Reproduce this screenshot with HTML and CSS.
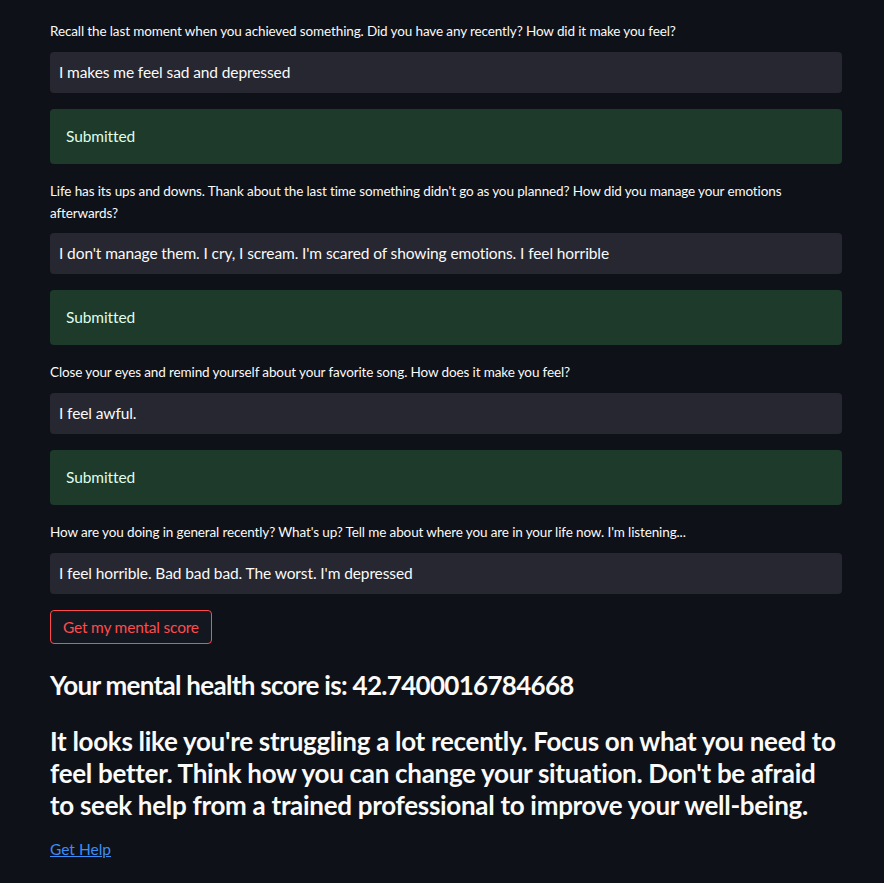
FILE: index.html
```html
<!DOCTYPE html>
<html>
<head>
<meta charset="utf-8">
<link rel="stylesheet" href="styles.css">
</head>
<body>
<main class="main">
  <div class="field">
    <label class="label">Recall the last moment when you achieved something. Did you have any recently? How did it make you feel?</label>
    <div class="input">I makes me feel sad and depressed</div>
  </div>
  <div class="alert">Submitted</div>
  <div class="field">
    <label class="label">Life has its ups and downs. Thank about the last time something didn't go as you planned? How did you manage your emotions afterwards?</label>
    <div class="input">I don't manage them. I cry, I scream. I'm scared of showing emotions. I feel horrible</div>
  </div>
  <div class="alert">Submitted</div>
  <div class="field">
    <label class="label">Close your eyes and remind yourself about your favorite song. How does it make you feel?</label>
    <div class="input">I feel awful.</div>
  </div>
  <div class="alert">Submitted</div>
  <div class="field">
    <label class="label">How are you doing in general recently? What's up? Tell me about where you are in your life now. I'm listening...</label>
    <div class="input">I feel horrible. Bad bad bad. The worst. I'm depressed</div>
  </div>
  <div class="btn-row"><button class="btn">Get my mental score</button></div>
  <h3 class="score">Your mental health score is: 42.7400016784668</h3>
  <h3 class="advice">It looks like you're struggling a lot recently. Focus on what you need to feel better. Think how you can change your situation. Don't be afraid to seek help from a trained professional to improve your well-being.</h3>
  <p class="link-row"><a class="link" href="#">Get Help</a></p>
</main>
</body>
</html>
```

FILE: styles.css
```css
html, body {
  margin: 0;
  padding: 0;
  background: #0e1117;
}
body {
  font-family: "Lato", "Liberation Sans", sans-serif;
  color: #fafafa;
}
.main {
  width: 792px;
  margin-left: 50px;
  padding-top: 20px;
  display: flex;
  flex-direction: column;
  gap: 16px;
}
.field {
  display: flex;
  flex-direction: column;
}
.label {
  font-size: 13.5px;
  letter-spacing: -0.12px;
  line-height: 22.4px;
  min-height: 24px;
  margin-bottom: 8px;
  color: #fafafa;
}
.input {
  height: 41px;
  box-sizing: border-box;
  background: #262730;
  border-radius: 4px;
  padding: 0 9px;
  font-size: 15.5px;
  letter-spacing: -0.1px;
  line-height: 41px;
  white-space: nowrap;
  overflow: hidden;
}
.alert {
  background: #1e3a2a;
  color: #dffde9;
  border-radius: 4px;
  padding: 16px;
  font-size: 15.5px;
  letter-spacing: -0.1px;
  line-height: 23px;
}
.btn-row {
  display: flex;
}
.btn {
  font-family: inherit;
  font-size: 15.5px;
  letter-spacing: -0.2px;
  line-height: 24px;
  padding: 4px 12px;
  background: #131720;
  color: #ff4b4b;
  border: 1px solid #ff4b4b;
  border-radius: 4px;
}
.score, .advice {
  margin: 0;
  font-size: 26px;
  letter-spacing: -0.7px;
  font-weight: 700;
  line-height: 34px;
  padding: 8px 0 7px;
}
.advice {
  letter-spacing: -0.3px;
  line-height: 32px;
  padding: 0;
}
.link-row {
  margin: 0;
  font-size: 15.5px;
  line-height: 24px;
}
.link {
  color: #3d8df5;
  text-decoration: underline;
}
```
